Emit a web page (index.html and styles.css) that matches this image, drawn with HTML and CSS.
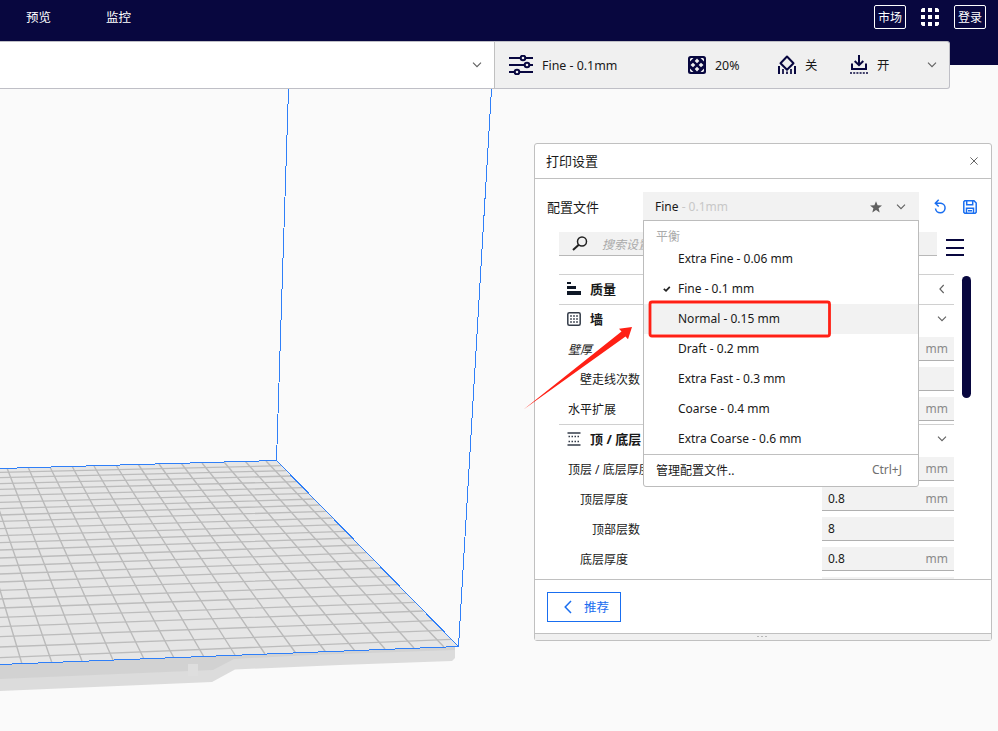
FILE: index.html
```html
<!DOCTYPE html>
<html lang="zh-CN">
<head>
<meta charset="utf-8">
<title>打印设置</title>
<link rel="stylesheet" href="styles.css">
</head>
<body>
<div class="app">
  <svg class="scene" width="998" height="731" viewBox="0 0 998 731">
    <defs><clipPath id="plate"><path d="M-90 471 276 460.500 458 646.500 -90 668z"/></clipPath></defs>
    <path fill="#dcdcdc" d="M0 664 455 647V658L452 661 340 665 235 669.500 212 682 0 691z"/>
    <path fill="#d2d2d2" d="M0 664 455 647V650L310 655 234 659 213 670 0 679z"/>
    <path fill="#dedede" d="M188 664h10v12h-10z"/>
    <g clip-path="url(#plate)">
      <path fill="#e6e6e6" d="M-90 440H470V700H-90z"/>
      <path class="grid-across" d="M0 472.300 281.600 465.700M0 477.700 286.500 470.700M0 483.700 291.600 476M0 489.300 297.200 481.700M0 495.700 303 487.700M0 502.300 308.600 493.300M0 508.700 314 499M0 515 320 505M0 521.300 326 511.300M0 528.700 332.700 518M0 535.700 339.300 524.700M0 542.700 345.700 531.300M0 550 352.300 538M0 558 359 545M0 566 366.600 552.700M0 574 374 560.300M0 582 381.600 568M0 590.300 389.700 576.300M0 599 398 584.700M0 608 406.400 593.300M0 617.300 415 602.300M0 626.700 423.700 611M0 636.700 433 620.700M0 647 442.600 630.300M0 657.700 451.300 639.300"/>
      <path class="grid-down" d="M266 461 444 647M245 461 414 648M224 462 385 649M202 463 355 651M181 463 325.700 652M159 464 295.700 653M138 464 265 654M116 465 235 655M94 466 204 657M72 466 174 658M50 467 144 659M28 467 113 660M7 468 82 661M-15 469 52 663M-36 469 22 664M-58 470-9 665"/>
    </g>
    <path class="volume" d="M0 468.500 276.500 460.500 458.500 646.500 0 664.500M276.500 460.500 288.500 89M458.500 646.500 491.500 89"/>
  </svg>

  <header class="topbar">
    <nav class="tabs"><span>预览</span><span>监控</span></nav>
    <div class="account">
      <span class="outlined">市场</span>
      <svg width="18" height="18" viewBox="0 0 18 18" fill="#fff"><path d="M1.500 0H4V4H0V1.500zM7 0h4v4H7zM14 0h2.500L18 1.500V4h-4zM0 7h4v4H0zM7 7h4v4H7zM14 7h4v4h-4zM0 14h4v4H1.500L0 16.500zM7 14h4v4H7zM14 14h4v2.500L16.500 18H14z"/></svg>
      <span class="outlined">登录</span>
    </div>
  </header>

  <div class="stagebar">
    <div class="machine"><svg class="chev" width="10" height="6" viewBox="0 0 10 6"><path d="M1 .7 5 4.700 9 .7"/></svg></div>
    <div class="summary">
      <span class="stat profile-stat"><svg width="24" height="20" viewBox="0 0 24 20" fill="none" stroke="#08073f" stroke-width="2"><path d="M0 3h11.500M17 3h7M0 10h15.500M21 10h3M0 17h5.500M11 17h13"/><circle cx="14" cy="3" r="2.300"/><circle cx="18" cy="10" r="2.300"/><circle cx="8" cy="17" r="2.300"/></svg><span>Fine - 0.1mm</span></span>
      <span class="stat infill-stat"><svg width="18" height="18" viewBox="0 0 18 18"><rect width="18" height="18" rx="2.500" fill="#08073f"/><path d="M9 2.500 11.300 5 9 7.300 6.700 5zM5 6.700 7.300 9 5 11.300 2.500 9zM13 6.700 15.500 9 13 11.300 10.700 9zM9 10.700 11.300 13 9 15.500 6.700 13zM3 2h2.500L2 5.500V3zM12.500 2H15l1 1v2.500zM2 12.500 5.500 16H3l-1-1zM16 12.500V15l-1 1h-2.500z" fill="#f0f0f0"/></svg><span>20%</span></span>
      <span class="stat support-stat"><svg width="18" height="20" viewBox="0 0 18 20" fill="none" stroke="#08073f" stroke-width="2"><path d="M9 1.500 15.500 8.200 9 14.800 2.500 8.200z" stroke-linejoin="round"/><path d="M1 11v8M17 11v8"/><path d="M5 14v5M13 14v5M9 16.500v2.500" stroke-width="1.700"/></svg><span>关</span></span>
      <span class="stat adhesion-stat"><svg width="18" height="20" viewBox="0 0 18 20" fill="none" stroke="#08073f" stroke-width="2"><path d="M9 0v10M4.700 6 9 10.200 13.300 6M2 8.500V14h14V8.500"/><path d="M0 18h18" stroke-dasharray="2 1.200" stroke-width="1.700"/></svg><span>开</span></span>
      <svg class="chev" width="10" height="6" viewBox="0 0 10 6"><path d="M1 .7 5 4.700 9 .7"/></svg>
    </div>
  </div>

  <section class="panel">
    <div class="panel-head"><h1>打印设置</h1><svg width="8" height="8" viewBox="0 0 8 8"><path d="M.4.4l7.200 7.200M7.600.4.4 7.600" stroke="#666" stroke-width="1"/></svg></div>
    <div class="panel-body">
      <div class="profile-row">
        <span class="profile-label">配置文件</span>
        <div class="select">
          <span>Fine <i>- 0.1mm</i></span>
          <svg class="star" width="12" height="12" viewBox="0 0 12 12"><path fill="#606060" d="M6 .3 7.600 4.200 12 4.400 8.600 7.200 9.700 11.400 6 9.100 2.300 11.400 3.400 7.200 0 4.400 4.400 4.200z"/></svg>
          <svg class="chev" width="10" height="6" viewBox="0 0 10 6"><path d="M1 .7 5 4.700 9 .7"/></svg>
          <div class="menu">
            <div class="menu-group">平衡</div>
            <div class="menu-item">Extra Fine - 0.06 mm</div>
            <div class="menu-item"><svg class="check" width="8" height="6" viewBox="0 0 8 6"><path d="M.8 2.800 3 4.800 6.800.8" fill="none" stroke="#222" stroke-width="1.700"/></svg>Fine - 0.1 mm</div>
            <div class="menu-item hover">Normal - 0.15 mm</div>
            <div class="menu-item">Draft - 0.2 mm</div>
            <div class="menu-item">Extra Fast - 0.3 mm</div>
            <div class="menu-item">Coarse - 0.4 mm</div>
            <div class="menu-item">Extra Coarse - 0.6 mm</div>
            <div class="menu-manage"><span>管理配置文件..</span><kbd>Ctrl+J</kbd></div>
          </div>
        </div>
        <svg class="reset" width="13" height="15" viewBox="0 0 13 15" fill="none" stroke="#196ef0" stroke-width="1.500"><path d="M1.800 4.200H7A4.800 4.800 0 1 1 1.500 9.500M4.700.7 1.300 4.200l3.400 3.300"/></svg>
        <svg class="save" width="14" height="14" viewBox="0 0 14 14" fill="none" stroke="#196ef0" stroke-width="1.500"><path d="M1.800.8H11L13.200 3v9.200l-1 1H1.800l-1-1V1.800zM3.700 1v3.700h6V1M3.500 13V8.300h7V13M5 10.700h4"/></svg>
      </div>
      <div class="search-row">
        <div class="search"><svg width="16" height="15" viewBox="0 0 16 15" fill="none" stroke="#222"><circle cx="10" cy="5.500" r="4.500" stroke-width="1.500"/><path d="M6.800 8.700 1 14" stroke-width="2"/></svg><em>搜索设置</em></div>
        <div class="burger"><b></b><b></b><b></b></div>
      </div>
      <div class="settings">
        <div class="list">
          <div class="row cat"><svg width="14" height="14" viewBox="0 0 14 14" fill="#0e1726"><path d="M0 0h4v2H0zM0 4h9v3H0zM0 9h14v4H0z"/></svg><span>质量</span><svg class="chev" width="6" height="10" viewBox="0 0 6 10"><path d="M4.700 1 .9 5l3.800 4"/></svg></div>
          <div class="row cat"><svg width="14" height="14" viewBox="0 0 14 14" fill="none" stroke="#343c49"><rect x=".8" y=".8" width="12.400" height="12.400" rx="1.500" stroke-width="1.500"/><path d="M3 4h8M3 7h8M3 10h8" stroke="#7b8089" stroke-width="2" stroke-dasharray="2 1"/></svg><span>墙</span><svg class="chev" width="10" height="6" viewBox="0 0 10 6"><path d="M1 .7 5 4.700 9 .7"/></svg></div>
          <div class="row"><span><em>壁厚</em></span><div class="field"><span>0.8</span><u>mm</u></div></div>
          <div class="row in1"><span>壁走线次数</span><div class="field"><span>2</span></div></div>
          <div class="row"><span>水平扩展</span><div class="field"><span>0</span><u>mm</u></div></div>
          <div class="row cat"><svg width="14" height="14" viewBox="0 0 14 14" fill="none" stroke="#343c49"><path d="M.5 1h13M.5 13h13" stroke-width="1.600"/><path d="M1.500 4.500h11M1.500 9.500h11" stroke-width="1.300" stroke-dasharray="1.500 1.500"/></svg><span>顶 / 底层</span><svg class="chev" width="10" height="6" viewBox="0 0 10 6"><path d="M1 .7 5 4.700 9 .7"/></svg></div>
          <div class="row"><span>顶层 / 底层厚度</span><div class="field"><span>0.8</span><u>mm</u></div></div>
          <div class="row in1"><span>顶层厚度</span><div class="field"><span>0.8</span><u>mm</u></div></div>
          <div class="row in2"><span>顶部层数</span><div class="field"><span>8</span></div></div>
          <div class="row in1"><span>底层厚度</span><div class="field"><span>0.8</span><u>mm</u></div></div>
          <div class="row"><div class="field"></div></div>
        </div>
        <div class="thumb"></div>
      </div>
    </div>
    <div class="panel-foot"><button><svg width="8" height="14" viewBox="0 0 8 14"><path d="M7 1 1.200 7 7 13" fill="none" stroke="#196ef0" stroke-width="1.500"/></svg><span>推荐</span></button></div>
    <div class="grip"><i></i><i></i><i></i></div>
  </section>

  <svg class="markup" width="998" height="731" viewBox="0 0 998 731">
    <rect x="650" y="302" width="179.500" height="34" rx="2" fill="none" stroke="#ff2015" stroke-width="2.800"/>
    <path fill="#ff2015" d="M632 327 619 328.700 621.500 331.500 523.500 409.500 625.500 336.500 628 339.300z"/>
  </svg>
</div>
</body>
</html>
```
FILE: styles.css
```css
* { box-sizing: border-box; }
body { margin: 0; background: #fafafa; }
.app {
  position: relative; width: 998px; height: 731px; overflow: hidden;
  font: 12px/16px "Noto Sans", "Noto Sans CJK SC", sans-serif; color: #191919;
}
svg { display: block; flex: none; }
.scene, .markup { position: absolute; left: 0; top: 0; }
.markup { pointer-events: none; z-index: 5; }
.grid-across { fill: none; stroke: #bcbcbc; stroke-width: 1.300; }
.grid-down { fill: none; stroke: #bababa; stroke-width: 1.400; }
.volume { fill: none; stroke: #2f7ff8; stroke-width: 1; shape-rendering: crispEdges; }
.chev { fill: none; stroke: #606060; stroke-width: 1.1; }

.topbar {
  position: relative; height: 65px; background: #08073f; color: #fff;
  display: flex; justify-content: space-between; align-items: flex-start;
  padding: 5px 12px 0 26px;
}
.tabs { display: flex; gap: 55px; font-size: 12.500px; line-height: 24px; padding-top: 1px; }
.account { display: flex; align-items: center; gap: 15px; }
.outlined { width: 32px; height: 24px; border: 1px solid #fff; border-radius: 2px; text-align: center; line-height: 24px; }

.stagebar {
  position: relative; margin-top: -24px; width: 950px; height: 48px; display: flex;
  border: 1px solid #bfbfc6; border-left: 0; border-radius: 0 3px 3px 0; background: #f0f0f0;
}
.machine { width: 495px; background: #fff; border-right: 1px solid #c0c0c0; display: flex; align-items: center; justify-content: flex-end; padding-right: 12px; }
.summary { flex: 1; display: flex; align-items: center; padding-left: 14px; }
.stat { display: flex; align-items: center; gap: 9px; font-size: 12.400px; }
.stat > span { padding-top: 2px; }
.profile-stat { width: 179px; }
.infill-stat { width: 90px; }
.support-stat { width: 72px; }
.adhesion-stat { width: 77px; }

.panel {
  position: absolute; left: 534px; top: 143px; width: 458px; height: 498px;
  background: #fff; border: 1px solid #c0c0c0; border-radius: 3px;
  display: flex; flex-direction: column;
}
.panel-head { height: 35px; flex: none; border-bottom: 1px solid #c0c0c0; display: flex; align-items: center; justify-content: space-between; padding: 0 13px 0 11px; }
.panel-head h1 { margin: 0; font-size: 13px; font-weight: 400; }
.panel-body { height: 400px; flex: none; padding: 13px 0 0 12px; }
.profile-row { display: flex; align-items: center; height: 29px; }
.profile-label { width: 96px; font-size: 13px; }
.select { position: relative; width: 276px; height: 29px; background: #f2f2f2; border-bottom: 1px solid #b0b0b0; display: flex; align-items: center; padding: 2px 13px 0 12px; }
.select > span { flex: 1; }
.select > span i { font-style: normal; color: #c8c8c8; }
.star { margin-right: 14px; }
.reset { margin-left: 15px; }
.save { margin-left: 16px; }

.menu { position: absolute; left: 0; top: 28px; width: 276px; height: 267px; z-index: 3; background: #fff; border: 1px solid #bcbcbc; border-radius: 0 0 3px 3px; }
.menu-group { height: 23px; padding: 8px 0 0 12px; color: #aaa; }
.menu-item { position: relative; height: 30px; line-height: 29px; padding-left: 34px; }
.menu-item.hover { background: #f2f2f2; }
.check { position: absolute; left: 19px; top: 12px; }
.menu-manage { height: 31px; border-top: 1px solid #c0c0c0; display: flex; align-items: center; justify-content: space-between; padding: 0 16px 0 12px; }
.menu-manage span { padding-top: 2px; }
.menu-manage kbd { font: inherit; color: #707070; }

.search-row { display: flex; margin: 11px 0 0 12px; }
.search { width: 378px; height: 24px; background: #f2f2f2; border-bottom: 1px solid #b8b8b8; display: flex; align-items: center; gap: 14px; padding-left: 13px; color: #aaa; }
.search em { padding-top: 2px; }
.burger { width: 18px; height: 17px; margin: 7px 0 0 9px; display: flex; flex-direction: column; justify-content: space-between; }
.burger b { height: 2px; background: #08073f; }

.settings { display: flex; margin: 18px 0 0 12px; }
.list { width: 395px; height: 305px; overflow: hidden; }
.row { height: 30px; padding-left: 9px; display: flex; align-items: center; justify-content: space-between; }
.row:not(.cat) > span { padding-top: 1px; }
.in1 { padding-left: 21px; }
.in2 { padding-left: 33px; }
.cat { border-top: 1px solid #d0d0d0; font-weight: 700; font-size: 13px; padding: 0 7px 1px 8px; gap: 9px; }
.cat > span { flex: 1; padding-bottom: 1px; }
.cat > .chev[width="6"] { margin-right: 2px; }
.field { width: 132px; height: 24px; margin: 0 0 0 auto; background: #f2f2f2; border-bottom: 1px solid #b0b0b0; display: flex; align-items: center; justify-content: space-between; padding: 0 6px; }
.field u { text-decoration: none; color: #8a8a8a; }
.thumb { width: 9px; height: 122px; margin: 2px 0 0 8px; border-radius: 5px; background: #08073f; }

.panel-foot { height: 54px; flex: none; border-top: 1px solid #c0c0c0; padding: 12px; }
.panel-foot button { width: 74px; height: 30px; margin: 0; padding: 0 0 0 16px; display: flex; align-items: center; gap: 12px; background: #fff; border: 1px solid #196ef0; color: #196ef0; font: inherit; font-size: 12.500px; }
.panel-foot button span { padding-top: 2px; }
.grip { flex: 1; background: #f0f0f0; border-top: 1px solid #c0c0c0; display: flex; justify-content: center; gap: 2px; padding: 2px 2px 0 0; }
.grip i { width: 2px; height: 1px; background: #b8b8b8; }
```
